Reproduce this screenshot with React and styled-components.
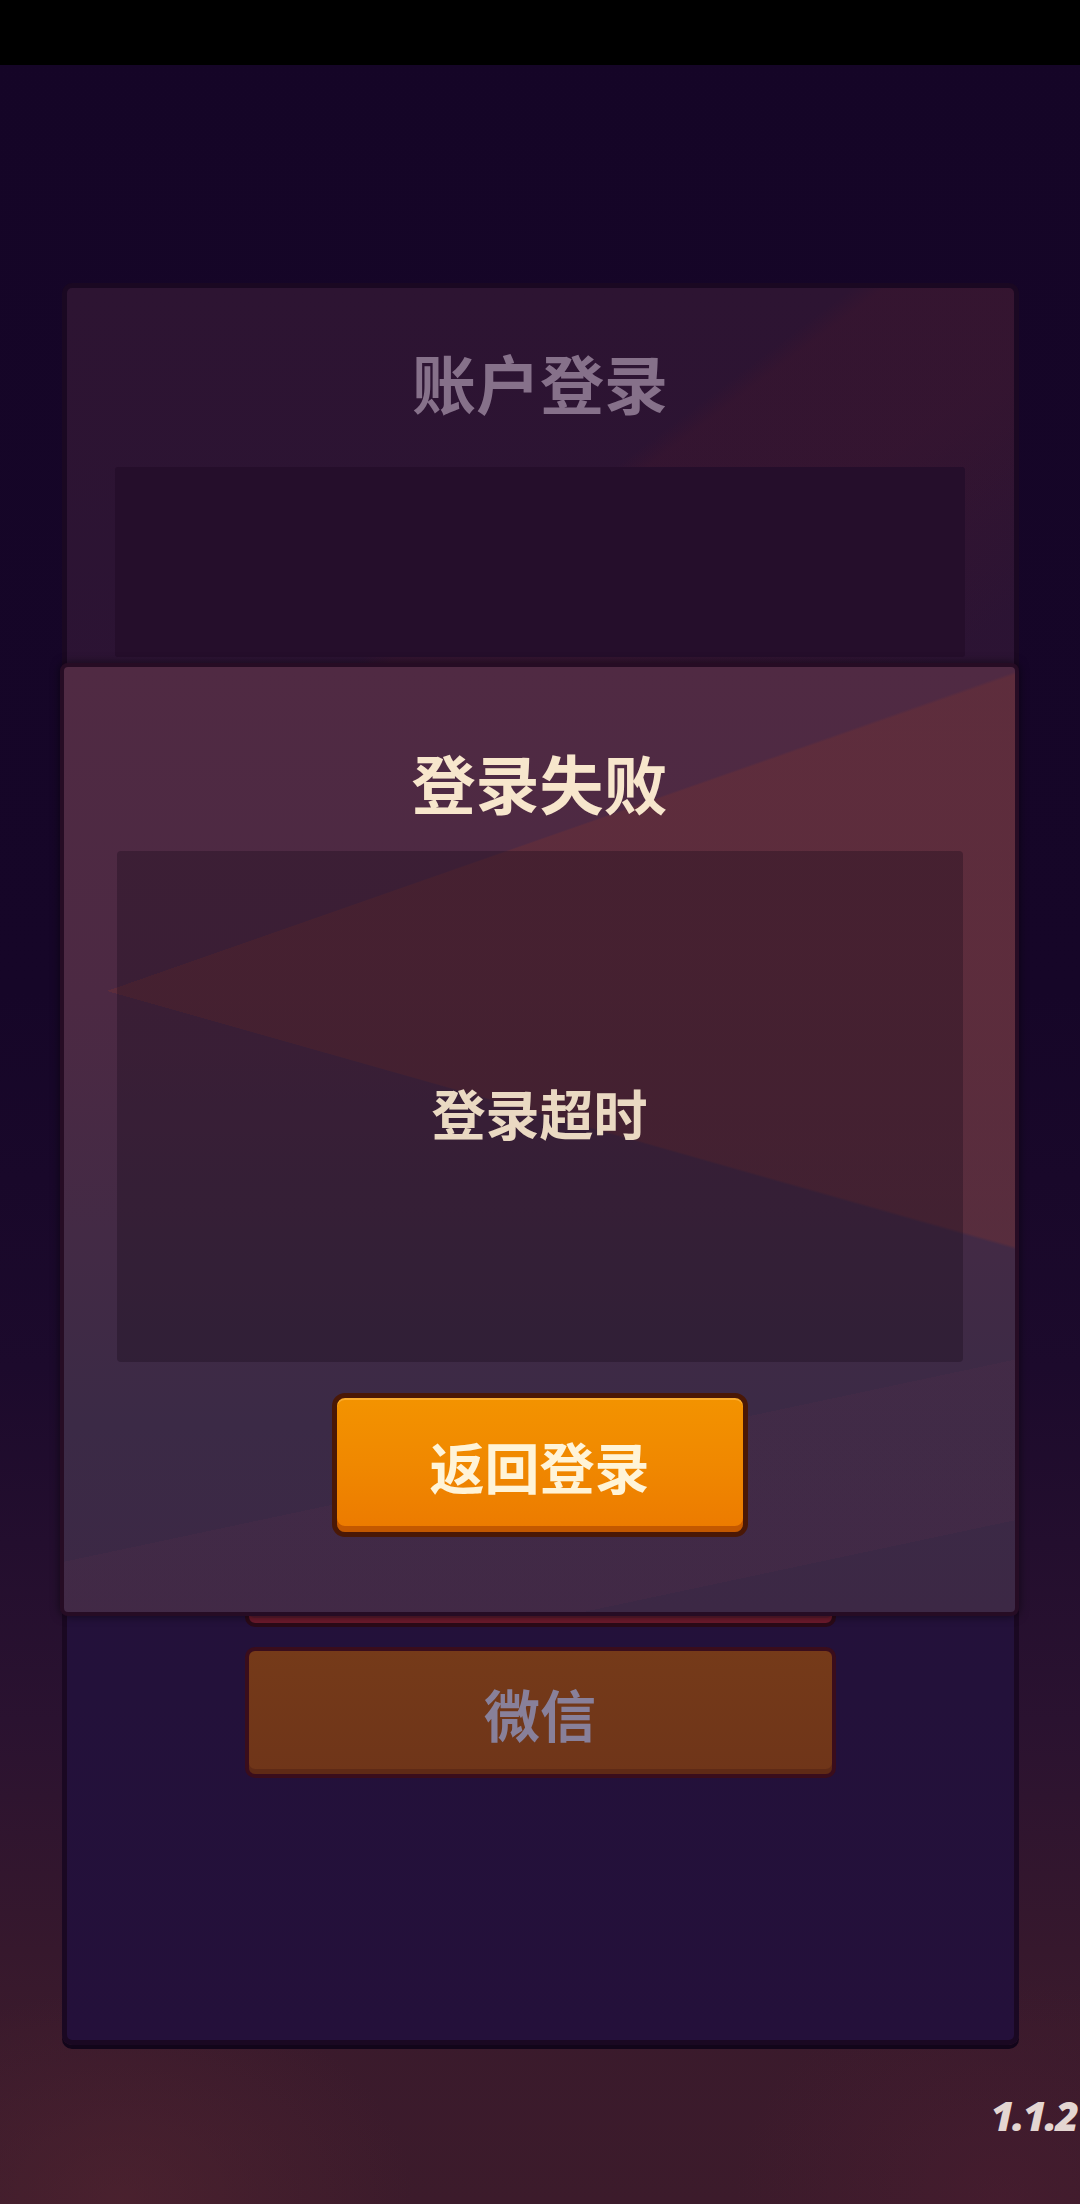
import React from "react";
import styled, { createGlobalStyle } from "styled-components";

const GlobalStyle = createGlobalStyle`
	html, body {
		margin: 0;
		padding: 0;
		background: #150527;
	}
	* {
		box-sizing: border-box;
	}
`;

const Page = styled.div`
	position: relative;
	width: 1080px;
	height: 2204px;
	overflow: hidden;
	font-family: "Noto Sans CJK SC", "Noto Sans", sans-serif;
	background:
		radial-gradient(ellipse 420px 300px at 120px 2200px, rgba(90, 40, 50, 0.45), transparent 70%),
		radial-gradient(ellipse 380px 320px at 1000px 2200px, rgba(80, 30, 50, 0.4), transparent 70%),
		linear-gradient(180deg, #150527 0%, #160628 45%, #1c0a2c 62%, #2a1230 78%, #3a1a2c 92%, #3c1b2b 100%);
`;

const StatusBar = styled.div`
	height: 65px;
	background: #000;
`;

const Main = styled.div`
	padding-top: 218px;
`;

const LoginPanel = styled.section`
	width: 957px;
	height: 1762px;
	margin: 0 auto;
	border: 5px solid #1a0822;
	border-radius: 10px;
	box-shadow: 0 4px 0 #12051a;
	display: flex;
	flex-direction: column;
	align-items: center;
	padding-top: 61px;
	background:
		linear-gradient(143deg, transparent 0 24%, rgba(66, 22, 44, 0.35) 25% 32%, transparent 42%),
		linear-gradient(180deg, #2d1432 0%, #2b1334 30%, #25113a 55%, #23113a 80%, #24103a 100%);
`;

const PanelTitle = styled.h1`
	margin: 0;
	font-size: 64px;
	line-height: 64px;
	font-weight: 700;
	color: #86718a;
`;

const InputBox = styled.div`
	width: 850px;
	height: 190px;
	margin-top: ${(p) => p.$gap}px;
	background: #250e2b;
	border-radius: 3px;
`;

const ButtonStack = styled.div`
	margin-top: 609px;
	display: flex;
	flex-direction: column;
	gap: 20px;
`;

const PanelButton = styled.div`
	width: 591px;
	height: 131px;
	border: 4px solid ${(p) => (p.$red ? "#2a0a18" : "#3a0d1c")};
	border-radius: 10px;
	display: flex;
	align-items: center;
	justify-content: center;
	font-size: 56px;
	font-weight: 700;
	color: #88809a;
	background: ${(p) => (p.$red ? "#5a1a2e" : "linear-gradient(180deg, #753a19 0%, #6f3519 100%)")};
	box-shadow: inset 0 -5px 0 ${(p) => (p.$red ? "#6b1a2c" : "#5f2a16")};
`;

const Overlay = styled.div`
	position: absolute;
	top: 663px;
	left: 60px;
	width: 959px;
	height: 953px;
	border: 4px solid #260c24;
	border-radius: 8px;
	box-shadow: 0 0 10px rgba(0, 0, 0, 0.55);
	display: flex;
	flex-direction: column;
	align-items: center;
	padding-top: 82px;
	background:
		conic-gradient(from 0deg at 43px 324px, transparent 0 70.6deg, rgba(108, 48, 54, 0.5) 70.8deg 105.7deg, transparent 105.9deg),
		linear-gradient(168deg, transparent 0 78%, rgba(78, 44, 72, 0.3) 78% 92%, transparent 92%),
		linear-gradient(180deg, #502a43 0%, #4c2943 35%, #432a45 60%, #3b2a46 80%, #3c2845 100%);
`;

const DialogTitle = styled.h2`
	margin: 0;
	font-size: 64px;
	line-height: 64px;
	font-weight: 700;
	color: #f7e6cc;
`;

const MessageBox = styled.div`
	width: 846px;
	height: 511px;
	margin-top: 38px;
	border-radius: 4px;
	background: rgba(22, 10, 24, 0.32);
	display: flex;
	align-items: center;
	justify-content: center;
	padding-top: 12px;
	font-size: 54px;
	font-weight: 700;
	color: #ead9c2;
`;

const PrimaryButton = styled.button`
	width: 416px;
	height: 144px;
	margin-top: 31px;
	border: 5px solid #4a1806;
	border-radius: 13px;
	padding: 0;
	font-family: inherit;
	font-size: 55px;
	font-weight: 700;
	color: #fff4d8;
	background: linear-gradient(180deg, #f39300 0%, #f08800 50%, #ec7a00 100%);
	box-shadow: inset 0 -6px 0 #c35800, inset 0 2px 0 rgba(255, 190, 80, 0.6);
	cursor: pointer;
`;

const Footer = styled.div`
	display: flex;
	justify-content: flex-end;
	padding-right: 3px;
	margin-top: 50px;
`;

const Version = styled.span`
	font-family: "Open Sans", "Lato", sans-serif;
	font-style: italic;
	font-weight: 800;
	font-size: 41px;
	line-height: 40px;
	letter-spacing: -2px;
	color: #e4d6d2;
`;

const App = () => {
	return (
		<>
			<GlobalStyle />
			<Page>
				<StatusBar />
				<Main>
					<LoginPanel>
						<PanelTitle>账户登录</PanelTitle>
						<InputBox $gap={54} />
						<InputBox $gap={40} />
						<ButtonStack>
							<PanelButton $red>登录</PanelButton>
							<PanelButton>微信</PanelButton>
						</ButtonStack>
					</LoginPanel>
					<Footer>
						<Version>1.1.2</Version>
					</Footer>
				</Main>
				<Overlay>
					<DialogTitle>登录失败</DialogTitle>
					<MessageBox>登录超时</MessageBox>
					<PrimaryButton>返回登录</PrimaryButton>
				</Overlay>
			</Page>
		</>
	);
};

export default App;
